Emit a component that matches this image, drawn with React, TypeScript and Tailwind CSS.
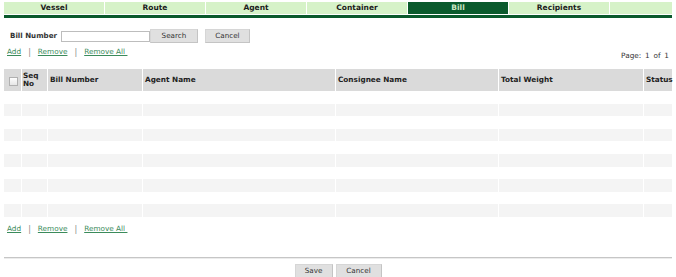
import React from "react";

const tabs = ["Vessel", "Route", "Agent", "Container", "Bill", "Recipients"];

const columns = [
  { key: "check", label: "" },
  { key: "seq", label: "Seq No" },
  { key: "bill", label: "Bill Number" },
  { key: "agent", label: "Agent Name" },
  { key: "consignee", label: "Consignee Name" },
  { key: "weight", label: "Total Weight" },
  { key: "status", label: "Status" },
];

const grid = "grid grid-cols-[18px_26px_95px_193px_163px_145px_28px]";

function Btn({ label, w }: { label: string; w: string }) {
  return (
    <button
      className={`${w} h-[14px] flex items-center justify-center bg-[#e0e0e0] border border-[#d6d6d6] border-r-[#c4c4c4] border-b-[#c4c4c4] text-[7.2px] leading-none text-[#333]`}
    >
      {label}
    </button>
  );
}

function Links() {
  return (
    <div className="flex items-start pl-[3px] h-[10px] leading-[10px] text-[7.3px] text-[#3b8b5b]">
      <span className="underline">Add</span>
      <span className="px-[7px] text-[#8a8a8a] text-[8px] leading-[10px] translate-y-[1px]">|</span>
      <span className="underline">Remove</span>
      <span className="px-[7px] text-[#8a8a8a] text-[8px] leading-[10px] translate-y-[1px]">|</span>
      <span className="underline">Remove All&nbsp;</span>
    </div>
  );
}

export default function App() {
  const rows = Array.from({ length: 10 }, (_, i) => i);

  return (
    <div className="w-[676px] h-[277px] bg-white px-[4px] pt-[2px] overflow-hidden font-['DejaVu_Sans',sans-serif] text-[#222]">
      {/* Tabs */}
      <div className="flex gap-[1px] h-[12px]">
        {tabs.map((t) => (
          <div
            key={t}
            className={`w-[100px] flex items-center justify-center text-[7.5px] font-bold leading-none ${
              t === "Bill" ? "bg-[#0a5a2c] text-[#cfe8c6]" : "bg-[#d6f2c8] text-[#1c1c1c]"
            }`}
          >
            {t}
          </div>
        ))}
        <div className="flex-1 bg-[#d6f2c8]" />
      </div>
      <div className="mt-[1px] h-[3px] bg-[#0a5a2c]" />

      {/* Search */}
      <div className="mt-[11px] flex items-center h-[14px]">
        <span className="ml-[6px] text-[7.1px] font-bold text-[#333]">Bill Number</span>
        <input className="ml-[4px] w-[89px] h-[11px] border border-[#bdbdbd] bg-white outline-none" />
        <Btn label="Search" w="w-[48px]" />
        <div className="ml-[7px]">
          <Btn label="Cancel" w="w-[45px]" />
        </div>
      </div>

      {/* Links / paging */}
      <div className="mt-[4px] flex items-start justify-between h-[14px]">
        <Links />
        <span className="mt-[4px] mr-[3px] text-[7.3px] leading-[10px] text-[#333] [word-spacing:1.5px]">
          Page: 1 of 1
        </span>
      </div>

      {/* Table */}
      <div className="mt-[8px]">
        <div className={`${grid} h-[22px]`}>
          {columns.map((c, i) => (
            <div
              key={c.key}
              className={`bg-[#dadada] flex items-center text-[7.3px] font-bold text-[#222] ${
                i < columns.length - 1 ? "border-r border-white" : ""
              } ${c.key === "seq" ? "pl-[1px]" : "pl-[2px]"}`}
            >
              {c.key === "check" ? (
                <span className="mx-auto mt-[2px] w-[9px] h-[9px] border border-[#b0b0b0] bg-gradient-to-b from-[#fdfdfd] to-[#e6e6e6]" />
              ) : c.key === "seq" ? (
                <span className="leading-[8px]">
                  Seq
                  <br />
                  No
                </span>
              ) : (
                <span className="leading-none">{c.label}</span>
              )}
            </div>
          ))}
        </div>
        {rows.map((r) => (
          <div key={r} className={`${grid} h-[12.6px]`}>
            {columns.map((c, i) => (
              <div
                key={c.key}
                className={`${r % 2 === 1 ? "bg-[#f4f4f4]" : "bg-white"} ${
                  i < columns.length - 1 ? "border-r border-white" : ""
                }`}
              />
            ))}
          </div>
        ))}
      </div>

      <div className="mt-[7px]">
        <Links />
      </div>

      {/* Footer */}
      <div className="mt-[23px] border-t border-[#c6c6c6]" />
      <div className="h-px bg-[#ececec]" />
      <div className="mt-[5px] flex justify-center gap-[3px]">
        <Btn label="Save" w="w-[38px]" />
        <Btn label="Cancel" w="w-[46px]" />
      </div>
    </div>
  );
}
